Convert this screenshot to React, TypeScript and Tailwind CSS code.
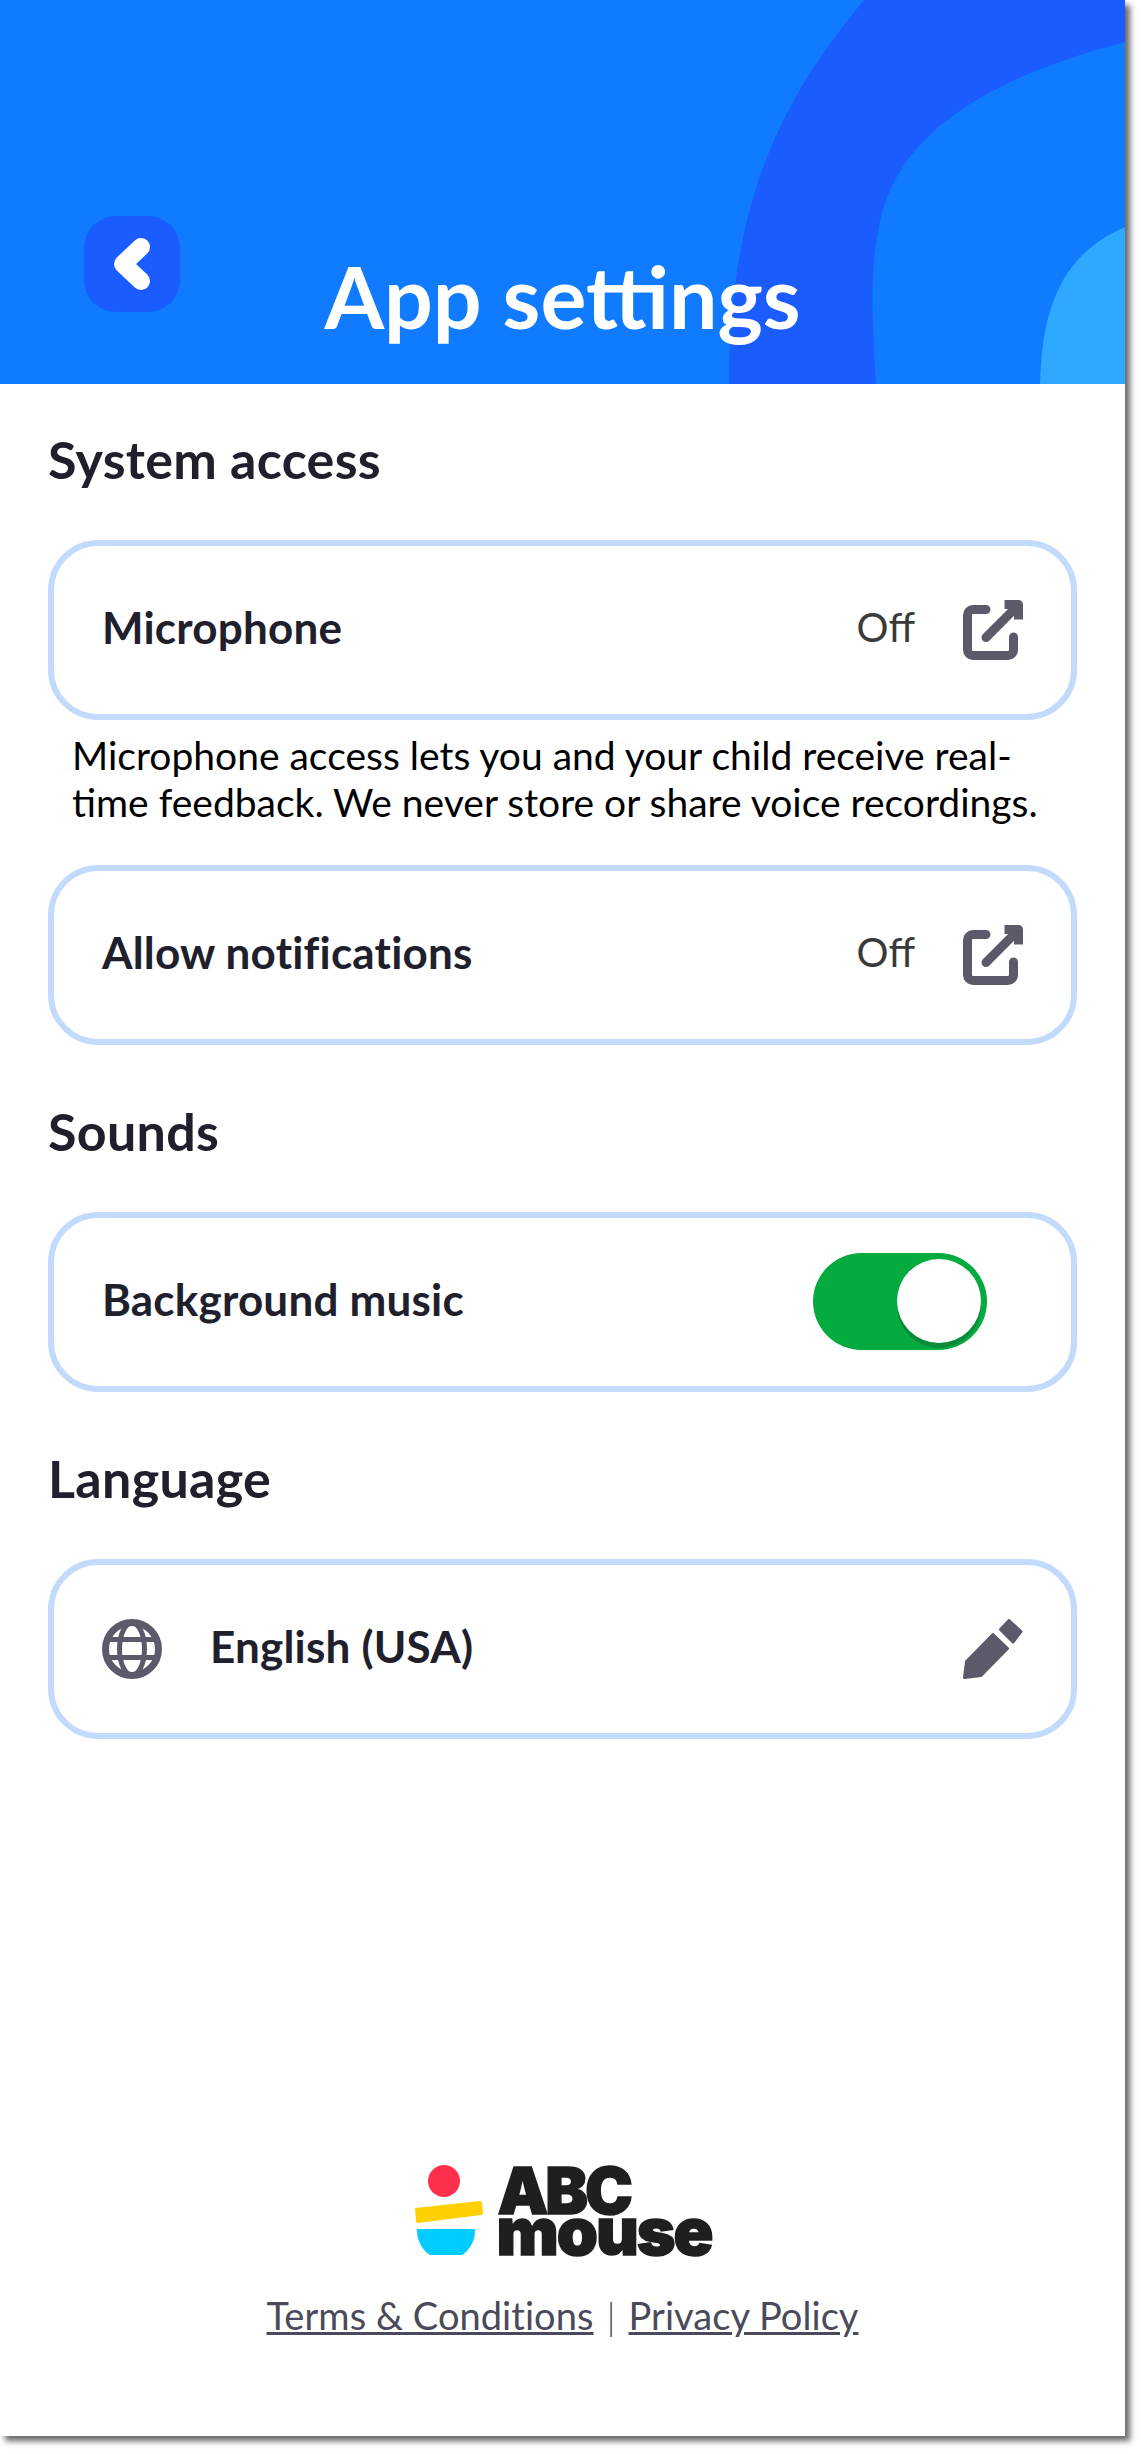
import type { ReactNode } from "react";

const fontStack = "font-['Lato','Open_Sans',sans-serif]";

function ExternalIcon() {
  return (
    <svg viewBox="0 0 60 60" className="w-[60px] h-[60px] shrink-0" fill="none" stroke="#5a5a6b" strokeWidth="9" strokeLinecap="round" strokeLinejoin="round">
      <path d="M23 9.500H10a5.500 5.500 0 0 0-5.500 5.500v35a5.500 5.500 0 0 0 5.500 5.500h35a5.500 5.500 0 0 0 5.500-5.500V37" />
      <path d="M23 37.500L52 8.500" />
      <path d="M41.500 4.500h14v15" strokeLinecap="butt" />
    </svg>
  );
}

function GlobeIcon() {
  return (
    <svg viewBox="0 0 60 60" className="w-[60px] h-[60px] shrink-0" fill="none" stroke="#5a5a6b">
      <circle cx="30" cy="30" r="26.500" strokeWidth="7" />
      <ellipse cx="30" cy="30" rx="12.500" ry="26" strokeWidth="5" />
      <path d="M5 20.500h50M5 38.500h50" strokeWidth="5" />
    </svg>
  );
}

function PencilIcon() {
  return (
    <svg viewBox="0 0 60 60" className="w-[60px] h-[60px] shrink-0" fill="#5a5a6b" stroke="#5a5a6b" strokeWidth="3" strokeLinejoin="round">
      <path d="M1.500 58.500L3.500 42.500L30 15.500L44.500 29.500L18 56.500Z" />
      <path d="M46 1.500L58 12.500L50 23L37.500 10.500Z" />
    </svg>
  );
}

function Toggle() {
  return (
    <div className="w-[174px] h-[97px] rounded-full bg-[#05ab3f] flex items-center justify-end pr-[6px] mr-[36px] -mt-[2px]">
      <div className="w-[84px] h-[84px] rounded-full bg-white shadow-[0_5px_0_#0a8a3a]" />
    </div>
  );
}

function Row({ children }: { children: ReactNode }) {
  return (
    <div className="h-[180px] rounded-[50px] border-[6px] border-[#c2dbfd] flex items-center justify-between pl-[48px] pr-[48px]">
      {children}
    </div>
  );
}

function RowLabel({ children }: { children: ReactNode }) {
  return <span className="text-[44px] leading-[52px] tracking-[0.2px] font-bold text-[#20202c] -mt-[7px]">{children}</span>;
}

function OffLabel() {
  return <span className="text-[40px] leading-[52px] text-[#3a3a3a] -mt-[7px]">Off</span>;
}

function SectionTitle({ children }: { children: ReactNode }) {
  return <h2 className="h-[60px] flex items-center pb-[2px] text-[52px] tracking-[0.3px] font-bold text-[#20202c] mb-[50px]">{children}</h2>;
}

function AbcMouseLogo() {
  return (
    <div className="flex items-start gap-[12px] h-[92px] -translate-y-[8px]">
      <svg viewBox="0 0 72 92" className="w-[72px] h-[92px] shrink-0 -mt-[4px]">
        <circle cx="31" cy="18" r="16" fill="#ff304d" />
        <path d="M2 45L67 38Q69 38 69 40L70 50Q70 52 68 52L5 60Q3 60 3 58Z" fill="#ffd000" />
        <path d="M5 66H60Q63 66 62 68A29 29 0 0 1 4 68Q3 66 5 66Z" fill="#00ccff" />
      </svg>
      <div className="flex flex-col font-['Inter',sans-serif] font-black text-[#1f1f1f]">
        <span className="text-[64px] leading-[48px] tracking-[-3px] [-webkit-text-stroke:1.500px_#1f1f1f]">ABC</span>
        <span className="text-[66px] leading-[44px] tracking-[-2px] -mt-[6px] -ml-[1px] [-webkit-text-stroke:1.500px_#1f1f1f]">mouse</span>
      </div>
    </div>
  );
}

export default function App() {
  return (
    <div className={`min-h-screen bg-white ${fontStack}`}>
      <div className="w-[1125px] h-[2436px] bg-white flex flex-col shadow-[5px_5px_6px_rgba(0,0,0,0.6)]">
        <header className="relative h-[384px] bg-[#107bff] overflow-hidden shrink-0 grid grid-cols-[1fr_auto_1fr] items-end">
          <svg viewBox="0 0 1125 384" className="absolute inset-0 w-full h-full">
            <path d="M864 0C790 90 729 190 729 384H876C872 320 870 270 878 233C890 150 960 85 1125 42V0Z" fill="#1b5cff" />
            <path d="M1040 384C1042 310 1060 255 1125 227V384Z" fill="#2fa9ff" />
          </svg>
          <div className="relative pl-[84px] pb-[72px]">
            <button className="w-[96px] h-[96px] rounded-[32px] bg-[#1b5cff] flex items-center justify-center">
              <svg viewBox="0 0 96 96" className="w-[96px] h-[96px]" fill="none" stroke="white" strokeWidth="18" strokeLinecap="round" strokeLinejoin="round">
                <path d="M57 31L39 48L57 65" />
              </svg>
            </button>
          </div>
          <h1 className="relative text-[86px] leading-[96px] font-bold text-white pb-[40px]">App settings</h1>
          <div />
        </header>

        <main className="px-[48px] pt-[46px] flex flex-col">
          <SectionTitle>System access</SectionTitle>
          <Row>
            <RowLabel>Microphone</RowLabel>
            <div className="flex items-center gap-[48px]">
              <OffLabel />
              <ExternalIcon />
            </div>
          </Row>
          <p className="pl-[24px] pr-[10px] pt-[12px] text-[39px] leading-[47px] text-black h-[145px]">
            Microphone access lets you and your child receive real-time feedback. We never store or share voice recordings.
          </p>
          <Row>
            <RowLabel>Allow notifications</RowLabel>
            <div className="flex items-center gap-[48px]">
              <OffLabel />
              <ExternalIcon />
            </div>
          </Row>

          <div className="mt-[57px]">
            <SectionTitle>Sounds</SectionTitle>
          </div>
          <Row>
            <RowLabel>Background music</RowLabel>
            <Toggle />
          </Row>

          <div className="mt-[57px]">
            <SectionTitle>Language</SectionTitle>
          </div>
          <Row>
            <div className="flex items-center gap-[48px]">
              <GlobeIcon />
              <RowLabel>English (USA)</RowLabel>
            </div>
            <PencilIcon />
          </Row>
        </main>

        <footer className="mt-auto pb-[97px] flex flex-col items-center">
          <AbcMouseLogo />
          <p className="mt-[24px] text-[38px] leading-[48px] tracking-[0.05px] text-[#4a4a5a]">
            <span className="underline">Terms &amp; Conditions</span>
            <span className="mx-[13px] font-light">|</span>
            <span className="underline">Privacy Policy</span>
          </p>
        </footer>
      </div>
    </div>
  );
}
